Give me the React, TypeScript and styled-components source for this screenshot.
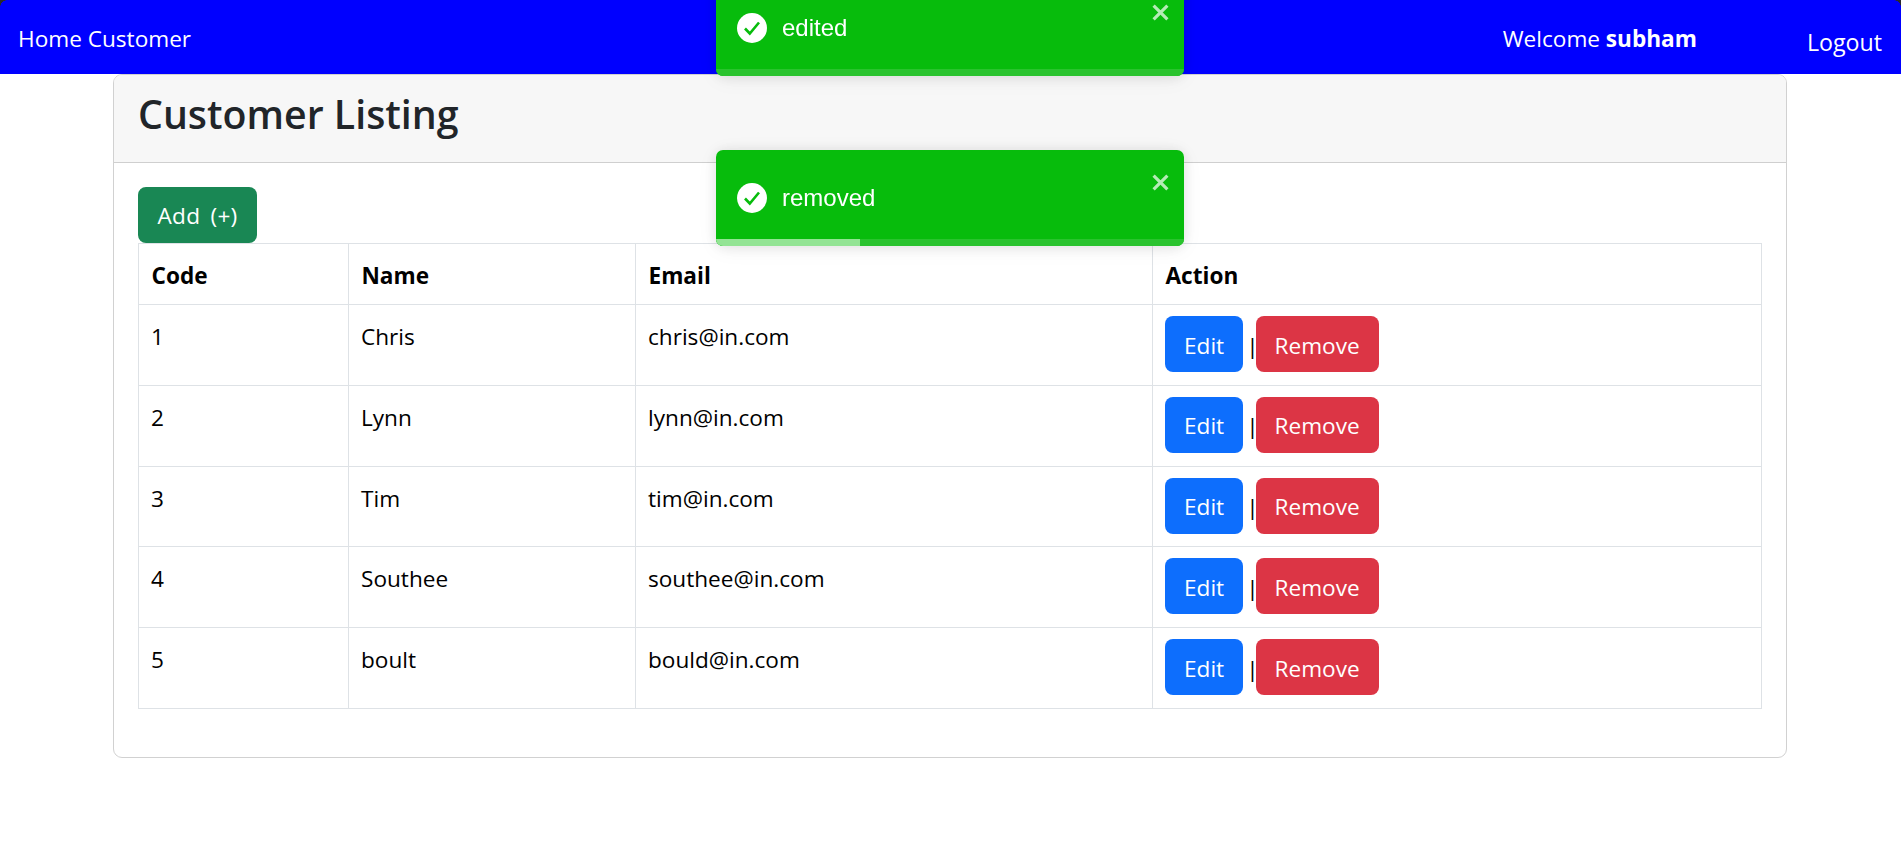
import React from "react";
import styled, { createGlobalStyle } from "styled-components";

const Global = createGlobalStyle`
  html, body { margin: 0; padding: 0; background: #fff; }
  body { font-family: "Open Sans", "Noto Sans", sans-serif; font-size: 22.6px; line-height: 34.8px; color: #000; overflow: hidden; }
  * { box-sizing: border-box; }
`;

const Nav = styled.nav`
  position: relative;
  height: 74px;
  background: #0000ff;
  color: #fff;
  display: flex;
  padding: 0 19px 0 18px;
  overflow: hidden;
`;
const Corner = styled.span<{ $right?: boolean }>`
  position: absolute;
  top: 0;
  ${(p) => (p.$right ? "right: 0;" : "left: 0;")}
  width: 7px;
  height: 7px;
  background: radial-gradient(circle at ${(p) => (p.$right ? "0 100%" : "100% 100%")}, transparent 6.5px, #2a2a2a 7px);
`;
const Brand = styled.span`
  line-height: 78px;
`;
const Welcome = styled.span`
  margin-left: auto;
  line-height: 78px;
  b { font-weight: 700; }
`;
const Logout = styled.span`
  margin-left: 110px;
  font-size: 23.2px;
  line-height: 84px;
`;

const Card = styled.section`
  width: 1674px;
  height: 684px;
  margin-left: 113px;
  border: 1px solid #d1d1d1;
  border-radius: 9px;
  overflow: hidden;
`;
const CardHeader = styled.header`
  height: 88px;
  padding: 0 24px;
  background: #f7f7f7;
  border-bottom: 1px solid #cfcfcf;
`;
const Title = styled.h1`
  margin: 0;
  font-size: 39.3px;
  font-weight: 600;
  line-height: 78px;
  color: #212529;
`;
const CardBody = styled.div`
  padding: 24px 24px 0;
`;
const Button = styled.button<{ $bg: string }>`
  display: inline-block;
  height: 56px;
  padding: 2px 19px 0;
  border: 0;
  border-radius: 8px;
  background: ${(p) => p.$bg};
  color: #fff;
  font: inherit;
  vertical-align: baseline;
`;
const AddButton = styled(Button)`
  display: block;
  width: 119px;
  padding: 2px 0 0;
  letter-spacing: 0.3px;
  word-spacing: 4px;
`;
const Table = styled.table`
  width: 1623px;
  border-collapse: collapse;
  table-layout: fixed;
`;
const Th = styled.th<{ $w: number }>`
  width: ${(p) => p.$w}px;
  height: 61px;
  padding: 4px 12px 0 12.5px;
  border: 1px solid #dee2e6;
  font-weight: 700;
  text-align: left;
`;
const Td = styled.td`
  height: 80.8px;
  padding: 11px 12px 12px;
  border: 1px solid #dee2e6;
  vertical-align: top;
  line-height: 41px;
`;
const Pipe = styled.span`
  margin: 0 -3px 0 3px;
`;

const Toasts = styled.div`
  position: fixed;
  top: -20px;
  left: 716px;
  width: 468px;
  display: flex;
  flex-direction: column;
  gap: 74px;
`;
const Toast = styled.div`
  position: relative;
  height: 96px;
  border-radius: 7px;
  overflow: hidden;
  background: #07bc0c;
  color: #fff;
  font-family: "Liberation Sans", Arial, sans-serif;
  font-size: 24px;
  display: flex;
  align-items: center;
  gap: 15px;
  padding: 0 21px 0;
  box-shadow: 0 1px 14px rgba(0, 0, 0, 0.1), 0 3px 22px rgba(0, 0, 0, 0.05);
`;
const ToastText = styled.span`
  line-height: 30px;
`;
const Close = styled.svg`
  position: absolute;
  top: 24px;
  right: 15px;
  width: 17px;
  height: 17px;
  opacity: 0.7;
`;
const Track = styled.div`
  position: absolute;
  left: 0;
  right: 0;
  bottom: 0;
  height: 7px;
  background: #2ac32e;
`;
const Progress = styled.div`
  height: 100%;
  background: #93e494;
`;

const CheckIcon = () => (
  <svg width="30" height="30" viewBox="0 0 30 30">
    <circle cx="15" cy="15" r="15" fill="#fff" />
    <path d="M8 15.5l4.8 5L22 9.5" fill="none" stroke="#07bc0c" strokeWidth="2.6" />
  </svg>
);

const rows = [
  [1, "Chris", "chris@in.com"],
  [2, "Lynn", "lynn@in.com"],
  [3, "Tim", "tim@in.com"],
  [4, "Southee", "southee@in.com"],
  [5, "boult", "bould@in.com"],
];

const ToastItem = ({ text, progress }: { text: string; progress?: number }) => (
  <Toast>
    <CheckIcon />
    <ToastText>{text}</ToastText>
    <Close viewBox="0 0 16 16">
      <path d="M1.5 1.5l13 13M14.5 1.5l-13 13" stroke="#fff" strokeWidth="3" />
    </Close>
    <Track>{progress ? <Progress style={{ width: progress }} /> : null}</Track>
  </Toast>
);

export default function App() {
  return (
    <>
      <Global />
      <Nav>
        <Corner />
        <Corner $right />
        <Brand>Home Customer</Brand>
        <Welcome>
          Welcome <b>subham</b>
        </Welcome>
        <Logout>Logout</Logout>
      </Nav>
      <Card>
        <CardHeader>
          <Title>Customer Listing</Title>
        </CardHeader>
        <CardBody>
          <AddButton $bg="#198754">Add (+)</AddButton>
          <Table>
            <thead>
              <tr>
                <Th $w={210}>Code</Th>
                <Th $w={287}>Name</Th>
                <Th $w={517}>Email</Th>
                <Th $w={609}>Action</Th>
              </tr>
            </thead>
            <tbody>
              {rows.map(([c, n, e]) => (
                <tr key={c}>
                  <Td>{c}</Td>
                  <Td>{n}</Td>
                  <Td>{e}</Td>
                  <Td>
                    <Button $bg="#0d6efd">Edit</Button>
                    <Pipe>|</Pipe>
                    <Button $bg="#dc3545">Remove</Button>
                  </Td>
                </tr>
              ))}
            </tbody>
          </Table>
        </CardBody>
      </Card>
      <Toasts>
        <ToastItem text="edited" />
        <ToastItem text="removed" progress={144} />
      </Toasts>
    </>
  );
}
